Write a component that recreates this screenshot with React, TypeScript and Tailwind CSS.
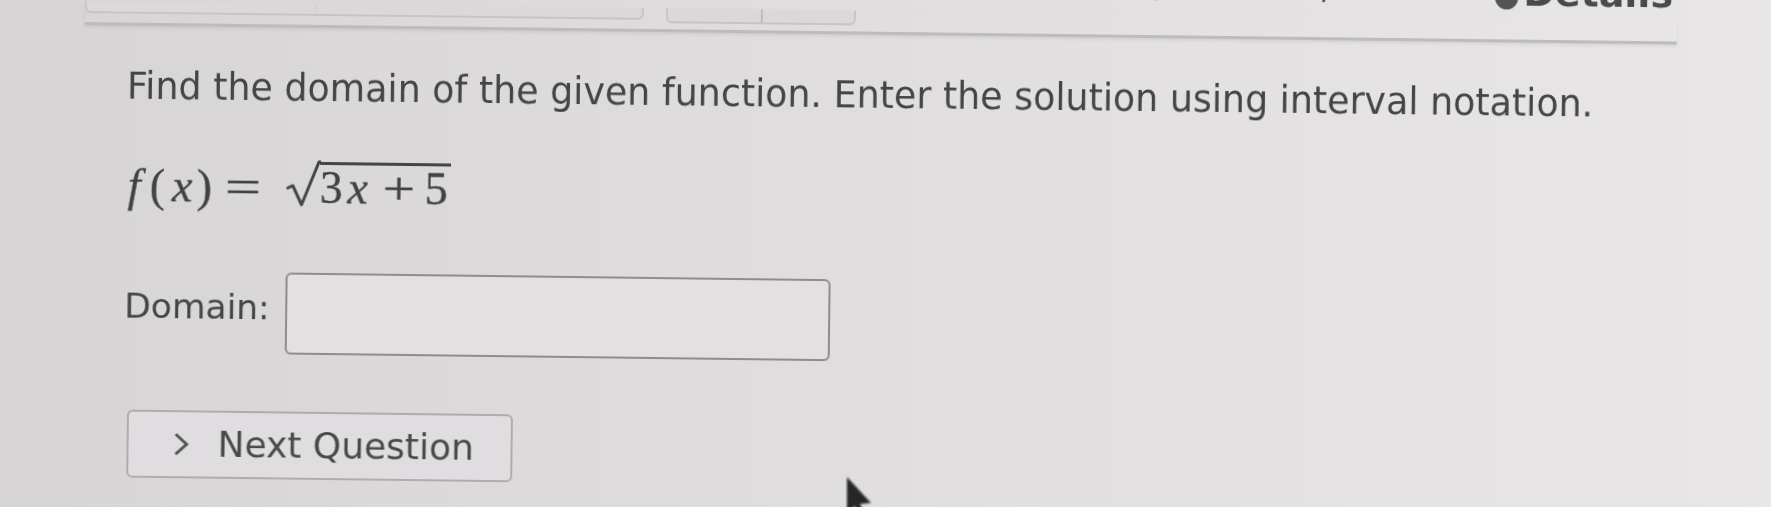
import React from "react";

const sans = { fontFamily: '"DejaVu Sans", "Noto Sans", sans-serif' };
const serif = { fontFamily: '"Liberation Serif", "Times New Roman", serif' };

function Radical() {
  return (
    <svg width="36" height="52" viewBox="0 0 36 52" className="shrink-0">
      <path
        d="M2 31 L8 28 L17 47 L34 4 L36 4"
        fill="none"
        stroke="#454545"
        strokeWidth="3"
        strokeLinejoin="round"
      />
    </svg>
  );
}

function Formula() {
  return (
    <div
      className="mt-[48px] ml-[2px] flex items-end text-[46px] leading-[44px] text-[#424242] [-webkit-text-stroke:0.3px_#424242]"
      style={serif}
    >
      <span className="inline-block w-[22px] italic">f</span>
      <span className="inline-block w-[18px]">(</span>
      <span className="inline-block w-[29px] text-center italic">x</span>
      <span className="inline-block w-[15px]">)</span>
      <span className="ml-[13px] inline-block w-[37px] origin-left scale-x-[1.4]">=</span>
      <span className="ml-[23px] flex items-end">
        <Radical />
        <span className="-ml-[1px] flex border-t-[3px] border-[#454545] pt-[1px] pr-[3px]">
          <span className="inline-block w-[23px]">3</span>
          <span className="inline-block w-[30px] text-center italic">x</span>
          <span className="ml-[10px] inline-block w-[32px] origin-left scale-x-[1.25]">+</span>
          <span className="ml-[10px] inline-block w-[23px]">5</span>
        </span>
      </span>
    </div>
  );
}

export default function App() {
  return (
    <div
      className="relative h-[507px] w-[1771px] overflow-hidden bg-gradient-to-r from-[#d6d4d5] via-[#e0dedf] to-[#e8e6e7]"
      style={sans}
    >
      <div className="origin-top-left rotate-[0.7deg] blur-[0.5px]">
        {/* top toolbar, mostly cut off */}
        <div className="ml-[85px] flex h-[24px] w-[1592px] items-start border-b-[3px] border-[#bdbbbc] shadow-[0_2px_3px_rgba(0,0,0,0.08)]">
          <div className="flex h-[12px] w-[559px] rounded-b-md border-x-2 border-b-2 border-[#c6c4c5] bg-[#dad8d9]">
            <div className="w-[230px] border-r border-[#cfcdce]" />
          </div>
          <div className="ml-[22px] flex h-[15px] w-[190px] rounded-b-md border-x-2 border-b-2 border-[#c6c4c5] bg-[#dad8d9]">
            <div className="w-[95px] border-r-2 border-[#bdbbbc]" />
          </div>
          <div className="-mt-[46px] ml-auto flex h-[40px] items-start pr-[4px] text-[#4a4a4a]">
            <span className="-mt-[4px] mr-[46px] text-[34px] leading-[40px]">Question 7, 1.2.35</span>
            <span className="mt-[14px] mr-[5px] inline-block h-[23px] w-[23px] rounded-full bg-[#555]" />
            <span className="text-[38px] leading-[40px] font-bold">Details</span>
          </div>
        </div>

        <div className="pl-[128px] text-[#454545]">
          <p className="mt-[40px] text-[36.4px] leading-[42px]">
            Find the domain of the given function. Enter the solution using interval notation.
          </p>

          <Formula />

          <div className="mt-[63px] flex items-center">
            <span className="-mt-[12px] w-[161px] text-[34.5px] leading-none">Domain:</span>
            <div className="h-[82px] w-[545px] rounded-md border-2 border-[#8e8c8d] bg-[#e2e0e1]" />
          </div>

          <button className="mt-[57px] ml-[4px] flex h-[68px] w-[386px] items-center rounded-md border-2 border-[#aeacad] bg-[#dfdddf] pl-[43px] text-[#4a4a4a]">
            <svg width="18" height="26" viewBox="0 0 18 26" className="mr-[28px] shrink-0">
              <path d="M4 3 L15 13 L4 23" fill="none" stroke="#555" strokeWidth="3" />
            </svg>
            <span className="text-[36px] leading-none">Next Question</span>
          </button>
        </div>
      </div>

      {/* mouse cursor */}
      <svg
        width="30"
        height="40"
        viewBox="0 0 30 40"
        className="absolute left-[846px] top-[476px] blur-[1px]"
      >
        <path d="M1 1 L1 38 L9 30 L15 42 L20 40 L14 28 L25 27 Z" fill="#262626" />
      </svg>
    </div>
  );
}
